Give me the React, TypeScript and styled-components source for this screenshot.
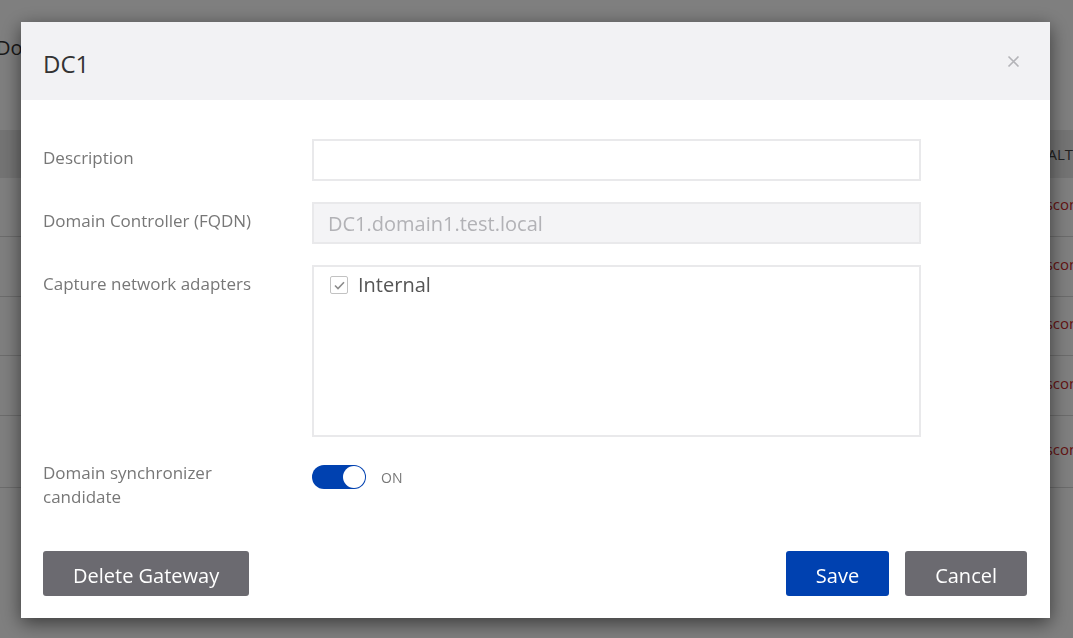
import React from "react";
import styled, { createGlobalStyle } from "styled-components";

const GlobalStyle = createGlobalStyle`
  html, body { margin: 0; padding: 0; }
  body {
    width: 1073px;
    height: 638px;
    overflow: hidden;
    background: #ffffff;
    font-family: "Open Sans", "Noto Sans", sans-serif;
  }
`;

/* ---------- background page ---------- */
const Page = styled.div`
  width: 1073px;
  height: 638px;
  background: #fff;
  overflow: hidden;
`;

const PageTitle = styled.div`
  height: 130px;
  box-sizing: border-box;
  padding-top: 34px;
  margin-left: -4px;
  font-size: 20px;
  color: #333;
  line-height: 28px;
`;

const TableHead = styled.div`
  height: 48px;
  background: #e9e9e9;
  display: flex;
  align-items: center;
  justify-content: flex-end;
  font-size: 15px;
  color: #444;
  white-space: nowrap;
  overflow: hidden;
`;

const HeadCell = styled.span`
  margin-right: -35px;
  width: 80px;
`;

const Row = styled.div<{ $h: number }>`
  height: ${(p) => p.$h}px;
  box-sizing: border-box;
  border-bottom: 1px solid #d8d8d8;
  display: flex;
  align-items: center;
  justify-content: flex-end;
  font-size: 15px;
  color: #c82a2a;
  overflow: hidden;
  white-space: nowrap;
`;

const RowCell = styled.span`
  margin-right: -38px;
  width: 80px;
  padding-bottom: 6px;
`;

/* ---------- overlay + modal ---------- */
const Overlay = styled.div`
  position: fixed;
  inset: 0;
  background: rgba(0, 0, 0, 0.5);
`;

const Modal = styled.div`
  position: fixed;
  left: 21px;
  top: 22px;
  width: 1029px;
  background: #fff;
  box-shadow: 0 5px 18px rgba(0, 0, 0, 0.55);
  display: flex;
  flex-direction: column;
`;

const Header = styled.div`
  height: 78px;
  background: #f2f2f4;
  display: flex;
  align-items: center;
  justify-content: space-between;
  padding: 0 30px 0 22px;
  box-sizing: border-box;
`;

const Title = styled.h2`
  margin: 0;
  font-weight: 400;
  font-size: 24px;
  color: #333;
  padding-top: 4px;
`;

const CloseButton = styled.button`
  border: 0;
  background: transparent;
  padding: 0;
  width: 13px;
  height: 13px;
  display: flex;
  cursor: pointer;
`;

const Body = styled.div`
  display: grid;
  grid-template-columns: 269px 609px;
  row-gap: 21px;
  padding: 39px 0 0 22px;
`;

const Label = styled.div<{ $pt?: number }>`
  font-size: 17px;
  line-height: 24px;
  color: #777;
  padding-top: ${(p) => p.$pt ?? 7}px;
  width: 222px;
`;

const TextInput = styled.input<{ $disabled?: boolean }>`
  box-sizing: border-box;
  height: 42px;
  width: 100%;
  border: 2px solid #e9e9eb;
  background: ${(p) => (p.$disabled ? "#f4f4f6" : "#fff")};
  font-family: inherit;
  font-size: 20px;
  color: #b0b0b4;
  padding: 0 14px;
  outline: none;
  &:disabled { color: #b2b2b6; }
`;

const ListBox = styled.div`
  box-sizing: border-box;
  height: 172px;
  border: 2px solid #e9e9eb;
  padding: 5px 16px;
`;

const CheckRow = styled.label`
  display: flex;
  align-items: center;
  gap: 10px;
  font-size: 20px;
  color: #555;
  line-height: 26px;
`;

const CheckBox = styled.span`
  width: 18px;
  height: 18px;
  box-sizing: border-box;
  border: 1.5px solid #c2c2c2;
  border-radius: 2px;
  display: flex;
  align-items: center;
  justify-content: center;
  background: #fff;
`;

const ToggleWrap = styled.div`
  display: flex;
  align-items: center;
  gap: 15px;
  padding-top: 7px;
  align-self: start;
`;

const Track = styled.span`
  width: 54px;
  height: 24px;
  border-radius: 12px;
  background: #0041b0;
  display: flex;
  align-items: center;
  justify-content: flex-end;
  padding: 0 1px;
  box-sizing: border-box;
`;

const Knob = styled.span`
  width: 22px;
  height: 22px;
  border-radius: 50%;
  background: #fff;
`;

const ToggleText = styled.span`
  font-size: 14px;
  color: #777;
`;

const Footer = styled.div`
  display: flex;
  align-items: center;
  padding: 42px 23px 22px 22px;
`;

const Button = styled.button<{ $variant: "grey" | "blue" }>`
  height: 45px;
  border: 0;
  border-radius: 3px;
  font-family: inherit;
  font-size: 20px;
  color: #fff;
  padding: 3px 30px 0;
  background: ${(p) => (p.$variant === "blue" ? "#0041b0" : "#6b6a70")};
  cursor: pointer;
`;

const Spacer = styled.div`
  flex: 1;
`;

const ButtonGroup = styled.div`
  display: flex;
  gap: 16px;
`;

export default function App() {
  return (
    <>
      <GlobalStyle />
      <Page>
        <PageTitle>Domain Controllers</PageTitle>
        <TableHead>
          <HeadCell>HEALTH</HeadCell>
        </TableHead>
        {[59, 60, 59, 60, 72].map((h, i) => (
          <Row key={i} $h={h}>
            <RowCell>Disconnected</RowCell>
          </Row>
        ))}
      </Page>
      <Overlay />
      <Modal role="dialog">
        <Header>
          <Title>DC1</Title>
          <CloseButton aria-label="Close">
            <svg width="13" height="13" viewBox="0 0 13 13">
              <path d="M1.5 1.5 L11.5 11.5 M11.5 1.5 L1.5 11.5" stroke="#b4b4b8" strokeWidth="1.6" />
            </svg>
          </CloseButton>
        </Header>
        <Body>
          <Label>Description</Label>
          <TextInput />
          <Label>Domain Controller (FQDN)</Label>
          <TextInput $disabled disabled value="DC1.domain1.test.local" readOnly />
          <Label>Capture network adapters</Label>
          <ListBox>
            <CheckRow>
              <CheckBox>
                <svg width="11" height="9" viewBox="0 0 11 9">
                  <path d="M1 4.5 L4 7.5 L10 1.2" fill="none" stroke="#8c8c8c" strokeWidth="1.6" />
                </svg>
              </CheckBox>
              Internal
            </CheckRow>
          </ListBox>
          <Label $pt={3}>Domain synchronizer candidate</Label>
          <ToggleWrap>
            <Track>
              <Knob />
            </Track>
            <ToggleText>ON</ToggleText>
          </ToggleWrap>
        </Body>
        <Footer>
          <Button $variant="grey">Delete Gateway</Button>
          <Spacer />
          <ButtonGroup>
            <Button $variant="blue">Save</Button>
            <Button $variant="grey">Cancel</Button>
          </ButtonGroup>
        </Footer>
      </Modal>
    </>
  );
}
